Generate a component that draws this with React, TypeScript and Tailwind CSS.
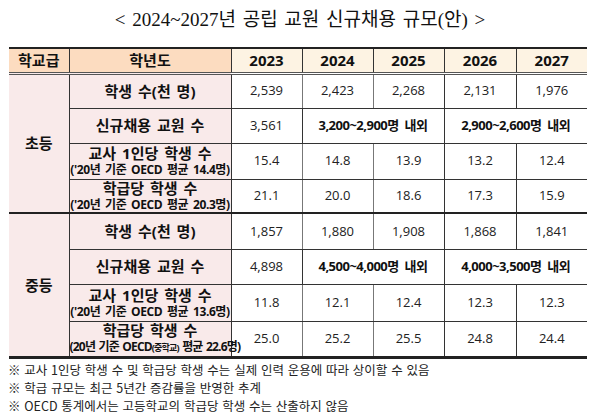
const years = ["2023", "2024", "2025", "2026", "2027"];

type Row = {
  label: string;
  sub?: string;
  values: string[];
  merged?: [string, string, string];
  h: string;
};

const elementary: Row[] = [
  { label: "학생 수(천 명)", values: ["2,539", "2,423", "2,268", "2,131", "1,976"], h: "h-[35px]" },
  { label: "신규채용 교원 수", values: [], merged: ["3,561", "3,200~2,900명 내외", "2,900~2,600명 내외"], h: "h-[35px]" },
  { label: "교사 1인당 학생 수", sub: "('20년 기준 OECD 평균 14.4명)", values: ["15.4", "14.8", "13.9", "13.2", "12.4"], h: "h-[36px]" },
  { label: "학급당 학생 수", sub: "('20년 기준 OECD 평균 20.3명)", values: ["21.1", "20.0", "18.6", "17.3", "15.9"], h: "h-[34px]" },
];

const middle: Row[] = [
  { label: "학생 수(천 명)", values: ["1,857", "1,880", "1,908", "1,868", "1,841"], h: "h-[36px]" },
  { label: "신규채용 교원 수", values: [], merged: ["4,898", "4,500~4,000명 내외", "4,000~3,500명 내외"], h: "h-[35px]" },
  { label: "교사 1인당 학생 수", sub: "('20년 기준 OECD 평균 13.6명)", values: ["11.8", "12.1", "12.4", "12.3", "12.3"], h: "h-[37px]" },
  { label: "학급당 학생 수", sub: "(20년 기준 OECD(중학교) 평균 22.6명)", values: ["25.0", "25.2", "25.5", "24.8", "24.4"], h: "h-[36px]" },
];

const notes = [
  "※ 교사 1인당 학생 수 및 학급당 학생 수는 실제 인력 운용에 따라 상이할 수 있음",
  "※ 학급 규모는 최근 5년간 증감률을 반영한 추계",
  "※ OECD 통계에서는 고등학교의 학급당 학생 수는 산출하지 않음",
];

function Label({ row }: { row: Row }) {
  return (
    <td className="border border-[#333] bg-[#f9eaea] p-0 text-center align-middle">
      <div className="text-[15px] leading-[17px] font-bold text-[#111] [word-spacing:2px]">{row.label}</div>
      {row.sub && (
        <div className="whitespace-nowrap text-[12px] leading-[15px] font-bold tracking-[-0.4px] text-[#111] [word-spacing:2px]">
          {row.sub.includes("중학교") ? (
            <span className="tracking-[-0.8px] [word-spacing:1px]">
              (20년 기준 OECD<span className="text-[9px]">(중학교)</span> 평균 22.6명)
            </span>
          ) : (
            row.sub
          )}
        </div>
      )}
    </td>
  );
}

function Section({ name, rows, last }: { name: string; rows: Row[]; last?: boolean }) {
  return (
    <>
      {rows.map((row, i) => (
        <tr
          key={i}
          className={`${row.h} ${i === rows.length - 1 ? (last ? "border-b-[3px]" : "border-b-2") + " border-b-[#222]" : ""}`}
        >
          {i === 0 && (
            <td rowSpan={rows.length} className="border-r border-r-[#333] bg-[#f9eaea] text-center text-[15px] font-bold text-[#111]">
              {name}
            </td>
          )}
          <Label row={row} />
          {row.merged ? (
            <>
              <td className="border border-[#333] text-center text-[13px] text-[#222]">{row.merged[0]}</td>
              <td colSpan={2} className="border border-[#333] text-center text-[13px] font-bold tracking-[-0.5px] text-[#111] [word-spacing:3px]">
                {row.merged[1]}
              </td>
              <td colSpan={2} className="border-y border-l border-[#333] text-center text-[13px] font-bold tracking-[-0.5px] text-[#111] [word-spacing:3px]">
                {row.merged[2]}
              </td>
            </>
          ) : (
            row.values.map((v, j) => (
              <td
                key={j}
                className={`border-y border-l border-[#333] text-center text-[13px] text-[#222] ${j === 1 || j === 2 ? "border-l-[#777]" : ""}`}
              >
                {v}
              </td>
            ))
          )}
        </tr>
      ))}
    </>
  );
}

export default function App() {
  return (
    <div className="h-[417px] w-[600px] overflow-hidden bg-white pt-[8px] font-['Open_Sans','Noto_Sans_CJK_KR',sans-serif]">
      <h1 className="text-center font-['Liberation_Serif','Noto_Sans_CJK_KR',serif] text-[19px] leading-[24px] text-[#111] [word-spacing:2px]">
        &lt; 2024~2027년 공립 교원 신규채용 규모(안) &gt;
      </h1>
      <div className="mt-[15px] px-[9px]">
        <table className="w-[578px] table-fixed border-collapse">
          <colgroup>
            <col className="w-[60px]" />
            <col className="w-[162px]" />
            <col className="w-[71px]" />
            <col className="w-[71px]" />
            <col className="w-[71px]" />
            <col className="w-[72px]" />
            <col className="w-[71px]" />
          </colgroup>
          <thead>
            <tr className="h-[24px] border-t-2 border-b-[3px] border-double border-t-[#222] border-b-[#555]">
              <th className="border-r border-[#333] bg-[#fcdcc0] text-[15px] font-bold text-[#111]">학교급</th>
              <th className="border-r border-[#333] bg-[#fcdcc0] text-[15px] font-bold text-[#111]">학년도</th>
              {years.map((y, i) => (
                <th
                  key={y}
                  className={`bg-[#fdf3e3] text-[15px] font-bold text-[#111] ${i < 4 ? "border-r border-[#333]" : ""}`}
                >
                  {y}
                </th>
              ))}
            </tr>
          </thead>
          <tbody>
            <Section name="초등" rows={elementary} />
            <Section name="중등" rows={middle} last />
          </tbody>
        </table>
      </div>
      <div className="mt-[2px] px-[8px] font-['Noto_Sans_CJK_KR',sans-serif] text-[12.5px] leading-[18px] text-[#222]">
        {notes.map((n) => (
          <p key={n} className="[word-spacing:1px]">{n}</p>
        ))}
      </div>
    </div>
  );
}
